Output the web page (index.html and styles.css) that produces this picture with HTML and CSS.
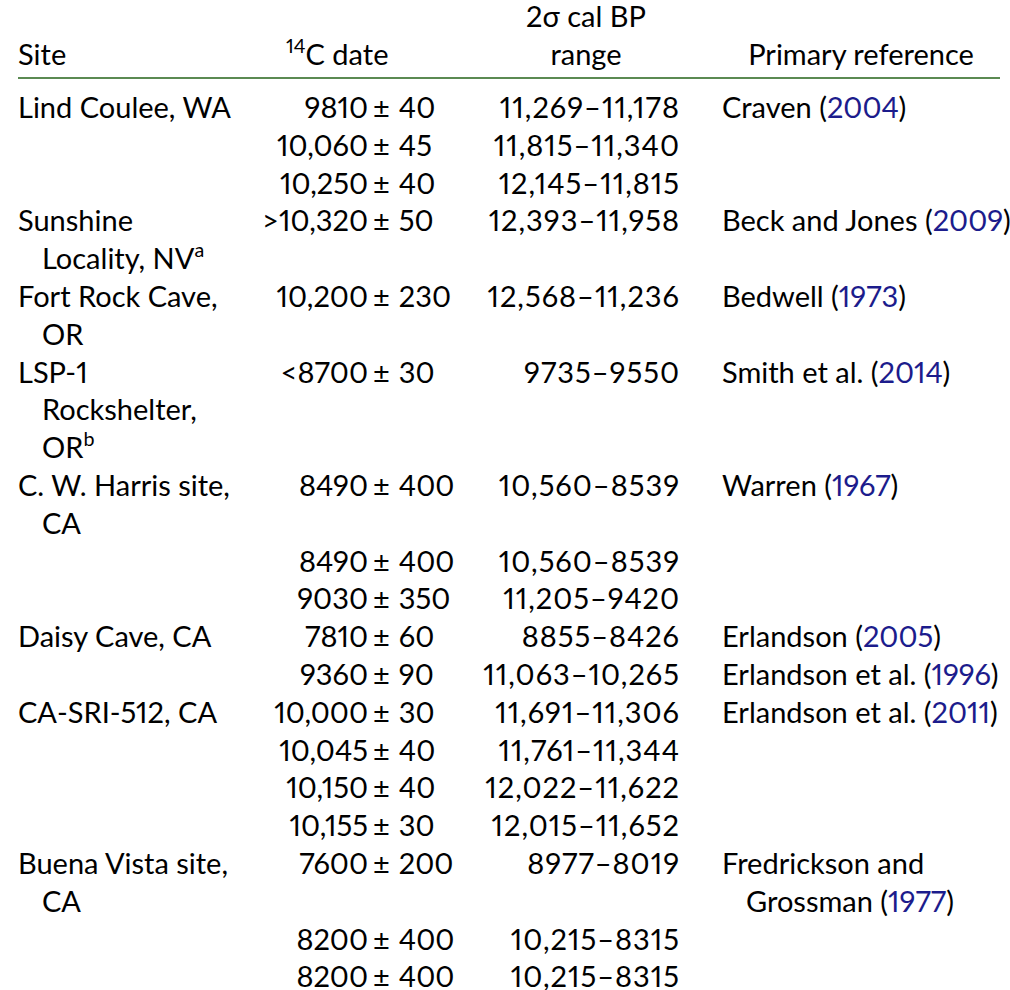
FILE: index.html
```html
<!DOCTYPE html>
<html lang="en">
<head>
<meta charset="utf-8">
<title>Radiocarbon dates</title>
<link rel="stylesheet" href="styles.css">
</head>
<body>
<table class="dates">
  <colgroup>
    <col class="c-site">
    <col class="c-date">
    <col class="c-range">
    <col class="c-ref">
  </colgroup>
  <thead>
    <tr>
      <th class="h-site">Site</th>
      <th class="h-date"><sup>14</sup>C date</th>
      <th class="h-range">2σ cal BP<br>range</th>
      <th class="h-ref">Primary reference</th>
    </tr>
  </thead>
  <tbody>
    <tr class="first">
      <td class="site">Lind Coulee, WA</td>
      <td><span class="d"><span class="lo">9810</span><span class="pm">±</span><span class="hi">40</span></span></td>
      <td class="range">11,269–11,178</td>
      <td class="ref">Craven (<a>2004</a>)</td>
    </tr>
    <tr>
      <td class="site"></td>
      <td><span class="d"><span class="lo">10,060</span><span class="pm">±</span><span class="hi">45</span></span></td>
      <td class="range">11,815–11,340</td>
      <td class="ref"></td>
    </tr>
    <tr>
      <td class="site"></td>
      <td><span class="d"><span class="lo">10,250</span><span class="pm">±</span><span class="hi">40</span></span></td>
      <td class="range">12,145–11,815</td>
      <td class="ref"></td>
    </tr>
    <tr>
      <td class="site">Sunshine<br>Locality, NV<sup>a</sup></td>
      <td><span class="d"><span class="lo">&gt;10,320</span><span class="pm">±</span><span class="hi">50</span></span></td>
      <td class="range">12,393–11,958</td>
      <td class="ref">Beck and Jones (<a>2009</a>)</td>
    </tr>
    <tr>
      <td class="site">Fort Rock Cave,<br>OR</td>
      <td><span class="d"><span class="lo">10,200</span><span class="pm">±</span><span class="hi">230</span></span></td>
      <td class="range">12,568–11,236</td>
      <td class="ref">Bedwell (<a>1973</a>)</td>
    </tr>
    <tr>
      <td class="site">LSP-1<br>Rockshelter,<br>OR<sup>b</sup></td>
      <td><span class="d"><span class="lo">&lt;8700</span><span class="pm">±</span><span class="hi">30</span></span></td>
      <td class="range">9735–9550</td>
      <td class="ref">Smith et al. (<a>2014</a>)</td>
    </tr>
    <tr>
      <td class="site">C. W. Harris site,<br>CA</td>
      <td><span class="d"><span class="lo">8490</span><span class="pm">±</span><span class="hi">400</span></span></td>
      <td class="range">10,560–8539</td>
      <td class="ref">Warren (<a>1967</a>)</td>
    </tr>
    <tr>
      <td class="site"></td>
      <td><span class="d"><span class="lo">8490</span><span class="pm">±</span><span class="hi">400</span></span></td>
      <td class="range">10,560–8539</td>
      <td class="ref"></td>
    </tr>
    <tr>
      <td class="site"></td>
      <td><span class="d"><span class="lo">9030</span><span class="pm">±</span><span class="hi">350</span></span></td>
      <td class="range">11,205–9420</td>
      <td class="ref"></td>
    </tr>
    <tr>
      <td class="site">Daisy Cave, CA</td>
      <td><span class="d"><span class="lo">7810</span><span class="pm">±</span><span class="hi">60</span></span></td>
      <td class="range">8855–8426</td>
      <td class="ref">Erlandson (<a>2005</a>)</td>
    </tr>
    <tr>
      <td class="site"></td>
      <td><span class="d"><span class="lo">9360</span><span class="pm">±</span><span class="hi">90</span></span></td>
      <td class="range">11,063–10,265</td>
      <td class="ref">Erlandson et al. (<a>1996</a>)</td>
    </tr>
    <tr>
      <td class="site">CA-SRI-512, CA</td>
      <td><span class="d"><span class="lo">10,000</span><span class="pm">±</span><span class="hi">30</span></span></td>
      <td class="range">11,691–11,306</td>
      <td class="ref">Erlandson et al. (<a>2011</a>)</td>
    </tr>
    <tr>
      <td class="site"></td>
      <td><span class="d"><span class="lo">10,045</span><span class="pm">±</span><span class="hi">40</span></span></td>
      <td class="range">11,761–11,344</td>
      <td class="ref"></td>
    </tr>
    <tr>
      <td class="site"></td>
      <td><span class="d"><span class="lo">10,150</span><span class="pm">±</span><span class="hi">40</span></span></td>
      <td class="range">12,022–11,622</td>
      <td class="ref"></td>
    </tr>
    <tr>
      <td class="site"></td>
      <td><span class="d"><span class="lo">10,155</span><span class="pm">±</span><span class="hi">30</span></span></td>
      <td class="range">12,015–11,652</td>
      <td class="ref"></td>
    </tr>
    <tr>
      <td class="site">Buena Vista site,<br>CA</td>
      <td><span class="d"><span class="lo">7600</span><span class="pm">±</span><span class="hi">200</span></span></td>
      <td class="range">8977–8019</td>
      <td class="ref hang">Fredrickson and<br>Grossman (<a>1977</a>)</td>
    </tr>
    <tr>
      <td class="site"></td>
      <td><span class="d"><span class="lo">8200</span><span class="pm">±</span><span class="hi">400</span></span></td>
      <td class="range">10,215–8315</td>
      <td class="ref"></td>
    </tr>
    <tr>
      <td class="site"></td>
      <td><span class="d"><span class="lo">8200</span><span class="pm">±</span><span class="hi">400</span></span></td>
      <td class="range">10,215–8315</td>
      <td class="ref"></td>
    </tr>
  </tbody>
</table>
</body>
</html>
```
FILE: styles.css
```css
html, body {
  margin: 0;
  padding: 0;
  background: #ffffff;
}

body {
  font-family: Lato, "Open Sans", sans-serif;
  font-size: 29px;
  line-height: 37.8px;
  color: #000000;
  font-variant-numeric: proportional-nums;
}

.dates {
  margin: -3px 0 0 18px;
  width: 982px;
  border-collapse: collapse;
  table-layout: fixed;
}

.c-site { width: 240px; }
.c-date { width: 202px; }
.c-range { width: 220px; }
.c-ref { width: 320px; }

.dates th,
.dates td {
  padding: 0;
  font-weight: normal;
  vertical-align: top;
  white-space: nowrap;
}

.dates thead th {
  vertical-align: bottom;
  padding-bottom: 4.5px;
  border-bottom: 2px solid #5b8a52;
}

.h-site { text-align: left; }
.h-date { text-align: left; padding-left: 28px !important; }
.h-range { text-align: center; padding-left: 32px !important; }
.h-ref { text-align: center; padding-left: 42px !important; }

.dates tbody tr.first td {
  padding-top: 9px;
}

.site {
  padding-left: 24px !important;
  text-indent: -24px;
  white-space: normal;
}

.d {
  display: flex;
  align-items: baseline;
}

.range {
  letter-spacing: 1px;
}

.lo {
  width: 110px;
  text-align: right;
  flex: none;
}

.pm {
  margin: 0 9px 0 5px;
}

.range {
  text-align: right;
}

.ref {
  padding-left: 42px !important;
}

.ref.hang {
  padding-left: 66px !important;
  text-indent: -24px;
}

.ref a {
  color: #1c1c8c;
  text-decoration: none;
}

sup {
  font-size: 0.68em;
  line-height: 0;
  vertical-align: 0.62em;
}
```
